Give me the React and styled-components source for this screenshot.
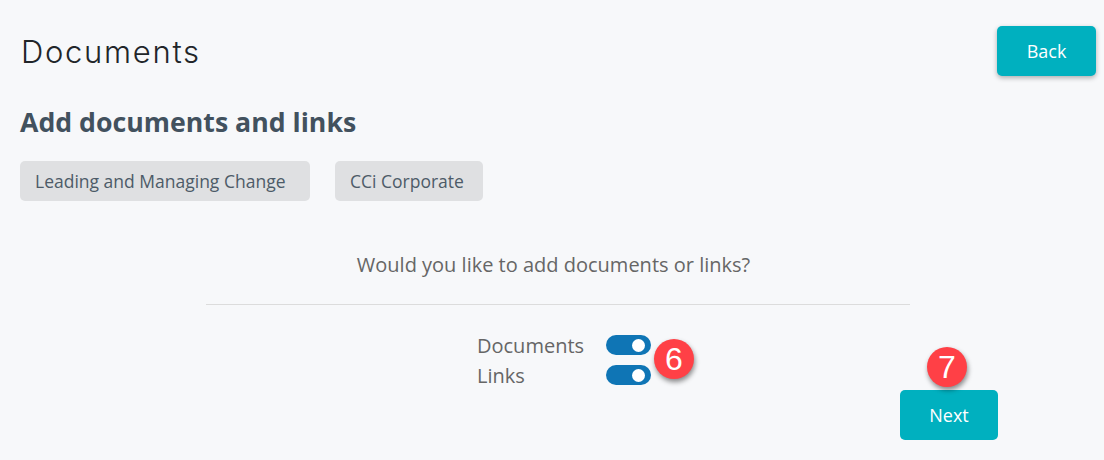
import styled, { createGlobalStyle } from 'styled-components'

const GlobalStyle = createGlobalStyle`
  html, body {
    margin: 0;
    padding: 0;
    background: #f7f8fa;
    font-family: "Open Sans", "Liberation Sans", sans-serif;
  }
`

const Page = styled.div`
  position: relative;
  width: 1104px;
  height: 460px;
  overflow: hidden;
  box-sizing: border-box;
  padding: 26px 8px 0 20px;
`

const Header = styled.div`
  display: flex;
  justify-content: space-between;
  align-items: center;
  height: 50px;
`

const Title = styled.h1`
  margin: 0 0 0 1px;
  font-family: Inter, "Open Sans", sans-serif;
  font-size: 31px;
  font-weight: 300;
  letter-spacing: 1.7px;
  color: #212529;
`

const ActionButton = styled.button`
  width: ${props => props.$width}px;
  height: 50px;
  border: none;
  border-radius: 5px;
  background: #00b0bf;
  color: #fff;
  font-family: inherit;
  font-size: 18px;
  box-shadow: ${props => props.$raised ? '0 2px 5px rgba(0, 0, 0, 0.3)' : 'none'};
`

const Subtitle = styled.h2`
  margin: 28px 0 0;
  font-size: 26.7px;
  line-height: 36px;
  font-weight: 700;
  color: #42515e;
`

const Chips = styled.div`
  display: flex;
  gap: 25px;
  margin-top: 21px;
`

const Chip = styled.div`
  box-sizing: border-box;
  width: ${props => props.$width}px;
  height: 40px;
  line-height: 40px;
  padding-left: 15px;
  border-radius: 5px;
  background: #dfe0e2;
  color: #4d5b68;
  font-size: 17.5px;
`

const Form = styled.div`
  width: 704px;
  margin: 44px 0 0 186px;
`

const Question = styled.div`
  box-sizing: border-box;
  height: 59px;
  padding-right: 9px;
  text-align: center;
  font-size: 20px;
  line-height: 40px;
  color: #666;
`

const Divider = styled.div`
  height: 1px;
  background: #dcdcdc;
`

const Toggles = styled.div`
  display: grid;
  grid-template-columns: 129px 45px;
  grid-auto-rows: 30px;
  align-items: center;
  height: 60px;
  margin: 25px 0 0 457px;
`

const ToggleLabel = styled.div`
  font-size: 20px;
  color: #666;
`

const Toggle = styled.div`
  position: relative;
  width: 45px;
  height: 20px;
  border-radius: 10px;
  background: #0f75b5;

  &::after {
    content: '';
    position: absolute;
    top: 4px;
    right: 6px;
    width: 13px;
    height: 13px;
    border-radius: 50%;
    background: #fff;
  }
`

const NextRow = styled.div`
  display: flex;
  justify-content: flex-end;
  margin-right: 98px;
`

const Badge = styled.div`
  position: absolute;
  left: ${props => props.$left}px;
  top: ${props => props.$top}px;
  width: 40px;
  height: 40px;
  border-radius: 50%;
  background: #ff4046;
  color: #fff;
  font-family: "Liberation Sans", sans-serif;
  font-size: 32px;
  line-height: 40px;
  text-align: center;
  box-shadow: 1px 3px 5px rgba(0, 0, 0, 0.45);
`

export default function App() {
  return (
    <Page>
      <GlobalStyle />
      <Header>
        <Title>Documents</Title>
        <ActionButton $width={99} $raised>Back</ActionButton>
      </Header>
      <Subtitle>Add documents and links</Subtitle>
      <Chips>
        <Chip $width={290}>Leading and Managing Change</Chip>
        <Chip $width={148}>CCi Corporate</Chip>
      </Chips>
      <Form>
        <Question>Would you like to add documents or links?</Question>
        <Divider />
      </Form>
      <Toggles>
        <ToggleLabel>Documents</ToggleLabel>
        <Toggle />
        <ToggleLabel>Links</ToggleLabel>
        <Toggle />
      </Toggles>
      <NextRow>
        <ActionButton $width={98}>Next</ActionButton>
      </NextRow>
      <Badge $left={654} $top={339}>6</Badge>
      <Badge $left={927} $top={347}>7</Badge>
    </Page>
  )
}
